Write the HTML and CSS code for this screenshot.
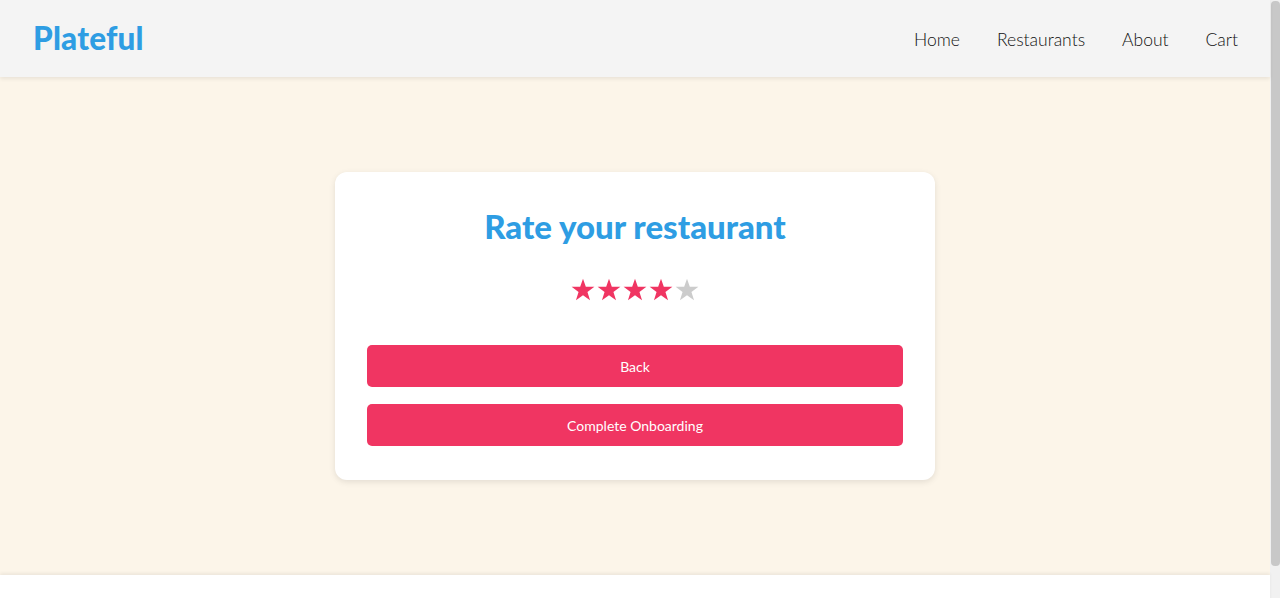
FILE: index.html
```html
<!DOCTYPE html>
<html lang="en">
<head>
<meta charset="utf-8">
<title>Plateful</title>
<link rel="stylesheet" href="styles.css">
</head>
<body>
<div class="page">
<header class="site-header">
  <a class="logo" href="#">Plateful</a>
  <nav class="nav">
    <a href="#">Home</a>
    <a href="#">Restaurants</a>
    <a href="#">About</a>
    <a href="#">Cart</a>
  </nav>
</header>
<main class="main">
  <section class="card">
    <h2 class="title">Rate your restaurant</h2>
    <div class="stars">
      <svg class="star on" viewBox="0 0 24 24"><polygon points="12,1.5 14.6,9 22.5,9 16.1,13.8 18.5,21.5 12,16.8 5.5,21.5 7.9,13.8 1.5,9 9.4,9"/></svg>
      <svg class="star on" viewBox="0 0 24 24"><polygon points="12,1.5 14.6,9 22.5,9 16.1,13.8 18.5,21.5 12,16.8 5.5,21.5 7.9,13.8 1.5,9 9.4,9"/></svg>
      <svg class="star on" viewBox="0 0 24 24"><polygon points="12,1.5 14.6,9 22.5,9 16.1,13.8 18.5,21.5 12,16.8 5.5,21.5 7.9,13.8 1.5,9 9.4,9"/></svg>
      <svg class="star on" viewBox="0 0 24 24"><polygon points="12,1.5 14.6,9 22.5,9 16.1,13.8 18.5,21.5 12,16.8 5.5,21.5 7.9,13.8 1.5,9 9.4,9"/></svg>
      <svg class="star off" viewBox="0 0 24 24"><polygon points="12,1.5 14.6,9 22.5,9 16.1,13.8 18.5,21.5 12,16.8 5.5,21.5 7.9,13.8 1.5,9 9.4,9"/></svg>
    </div>
    <div class="actions">
      <button class="btn" type="button">Back</button>
      <button class="btn" type="button">Complete Onboarding</button>
    </div>
  </section>
</main>
<footer class="site-footer">
  <p>© 2024 Plateful. All rights reserved.</p>
</footer>
</div>
<div class="scroll-rail" aria-hidden="true"><div class="scroll-thumb"></div></div>
</body>
</html>
```

FILE: styles.css
```css
* { box-sizing: border-box; }

body {
  margin: 0;
  display: flex;
  align-items: stretch;
  font-family: Lato, "Open Sans", sans-serif;
  color: #333;
  background: #fff;
}

.page {
  flex: 1;
  min-width: 0;
}

.scroll-rail {
  width: 10px;
  flex: none;
  background: #f1f1f1;
  padding-top: 1px;
}

.scroll-thumb {
  width: 9px;
  margin-left: 1px;
  height: 565px;
  background: #c8c8c8;
  border-radius: 4px;
}

.site-header {
  height: 77px;
  background: #f4f4f4;
  display: flex;
  align-items: center;
  justify-content: space-between;
  padding: 0 32px 0 33px;
  box-shadow: 0 2px 4px rgba(0, 0, 0, 0.08);
  position: relative;
  z-index: 2;
}

.logo {
  font-size: 31.5px;
  font-weight: 900;
  color: #2e9de3;
  text-decoration: none;
  letter-spacing: 0.2px;
  padding-bottom: 2px;
}

.nav {
  display: flex;
  gap: 37px;
  padding-top: 2px;
}

.nav a {
  font-size: 17.5px;
  font-weight: 300;
  color: #111;
  text-decoration: none;
}

.main {
  min-height: calc(100vh - 100px);
  background: #fcf5e9;
  display: flex;
  align-items: center;
  justify-content: center;
}

.card {
  width: 600px;
  background: #fff;
  border-radius: 12px;
  box-shadow: 0 2px 6px rgba(0, 0, 0, 0.1);
  padding: 33px 32px 34px;
  text-align: center;
}

.title {
  margin: 0;
  padding-top: 1px;
  font-size: 33px;
  line-height: 40px;
  font-weight: 900;
  color: #2e9de3;
}

.stars {
  margin: 31px 0 0;
  height: 26px;
  display: flex;
  justify-content: center;
  gap: 0;
}

.star { width: 26px; height: 26px; }
.star.on { fill: #f03562; }
.star.off { fill: #cccccc; }

.actions {
  margin-top: 42px;
  display: flex;
  flex-direction: column;
  gap: 17px;
}

.btn {
  height: 42px;
  border: 0;
  border-radius: 5px;
  background: #f03562;
  color: #fff;
  font-family: Lato, "Open Sans", sans-serif;
  font-size: 14px;
  cursor: pointer;
}

.site-footer {
  height: 57px;
  background: #fff;
  box-shadow: 0 -2px 3px rgba(0, 0, 0, 0.06);
  text-align: center;
  padding-top: 20px;
  position: relative;
}

.site-footer p {
  margin: 0;
  font-size: 14px;
  color: #666;
}
```
